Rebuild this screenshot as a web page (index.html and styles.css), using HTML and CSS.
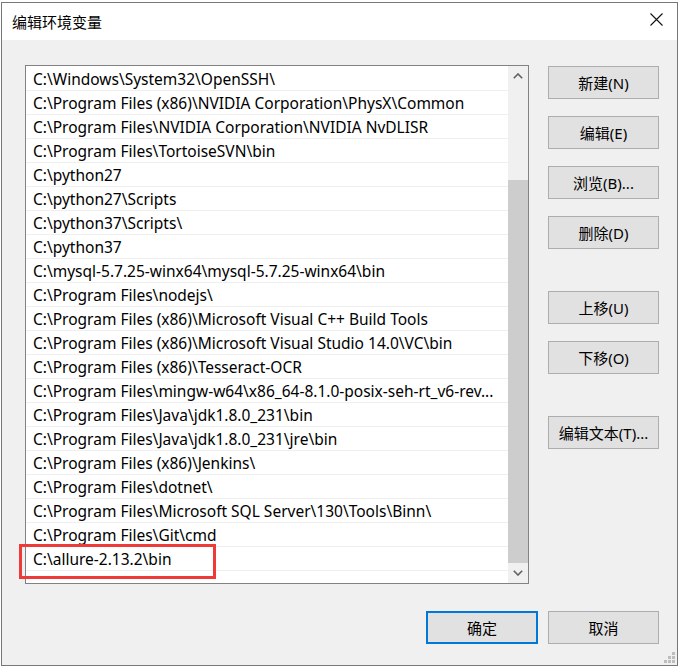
FILE: index.html
```html
<!DOCTYPE html>
<html lang="zh-CN">
<head>
<meta charset="utf-8">
<title>编辑环境变量</title>
<link rel="stylesheet" href="styles.css">
</head>
<body>
<div class="window">
  <div class="titlebar">
    <span class="title">编辑环境变量</span>
    <svg class="close" width="13" height="13" viewBox="0 0 13 13"><path d="M0.5 0.5 L12.5 12.5 M12.5 0.5 L0.5 12.5" stroke="#111" stroke-width="1.1" fill="none"/></svg>
  </div>
  <div class="main">
    <div class="list">
      <div class="rows">
        <div class="row">C:\Windows\System32\OpenSSH\</div>
        <div class="row">C:\Program Files (x86)\NVIDIA Corporation\PhysX\Common</div>
        <div class="row">C:\Program Files\NVIDIA Corporation\NVIDIA NvDLISR</div>
        <div class="row">C:\Program Files\TortoiseSVN\bin</div>
        <div class="row">C:\python27</div>
        <div class="row">C:\python27\Scripts</div>
        <div class="row">C:\python37\Scripts\</div>
        <div class="row">C:\python37</div>
        <div class="row">C:\mysql-5.7.25-winx64\mysql-5.7.25-winx64\bin</div>
        <div class="row">C:\Program Files\nodejs\</div>
        <div class="row">C:\Program Files (x86)\Microsoft Visual C++ Build Tools</div>
        <div class="row">C:\Program Files (x86)\Microsoft Visual Studio 14.0\VC\bin</div>
        <div class="row">C:\Program Files (x86)\Tesseract-OCR</div>
        <div class="row">C:\Program Files\mingw-w64\x86_64-8.1.0-posix-seh-rt_v6-rev...</div>
        <div class="row">C:\Program Files\Java\jdk1.8.0_231\bin</div>
        <div class="row">C:\Program Files\Java\jdk1.8.0_231\jre\bin</div>
        <div class="row">C:\Program Files (x86)\Jenkins\</div>
        <div class="row">C:\Program Files\dotnet\</div>
        <div class="row">C:\Program Files\Microsoft SQL Server\130\Tools\Binn\</div>
        <div class="row">C:\Program Files\Git\cmd</div>
        <div class="row">C:\allure-2.13.2\bin</div>
      </div>
      <div class="scrollbar">
        <div class="sb-btn"><svg width="10" height="6" viewBox="0 0 10 6"><path d="M0.8 5.2 L5 1 L9.2 5.2" stroke="#606060" stroke-width="1.6" fill="none"/></svg></div>
        <div class="track"><div class="thumb"></div></div>
        <div class="sb-btn"><svg width="10" height="6" viewBox="0 0 10 6"><path d="M0.8 0.8 L5 5 L9.2 0.8" stroke="#606060" stroke-width="1.6" fill="none"/></svg></div>
      </div>
    </div>
    <div class="side">
      <div class="btn">新建(N)</div>
      <div class="btn">编辑(E)</div>
      <div class="btn">浏览(B)...</div>
      <div class="btn">删除(D)</div>
      <div class="btn group">上移(U)</div>
      <div class="btn">下移(O)</div>
      <div class="btn group">编辑文本(T)...</div>
    </div>
  </div>
  <div class="footer">
    <div class="btn primary">确定</div>
    <div class="btn">取消</div>
  </div>
  <div class="highlight"></div>
  <svg class="grip" width="12" height="12" viewBox="0 0 12 12">
    <rect x="9" y="0" width="3" height="3" fill="#bdbdbd"/>
    <rect x="5" y="4" width="3" height="3" fill="#bdbdbd"/>
    <rect x="9" y="4" width="3" height="3" fill="#bdbdbd"/>
    <rect x="1" y="8" width="3" height="3" fill="#bdbdbd"/>
    <rect x="5" y="8" width="3" height="3" fill="#bdbdbd"/>
    <rect x="9" y="8" width="3" height="3" fill="#bdbdbd"/>
  </svg>
</div>
</body>
</html>
```

FILE: styles.css
```css
html, body {
  margin: 0;
  padding: 0;
  background: #ffffff;
}

body {
  font-family: "Noto Sans", "Noto Sans CJK SC", sans-serif;
  font-size: 15px;
  color: #000;
}

.window {
  position: relative;
  box-sizing: border-box;
  width: 677px;
  height: 664px;
  margin: 2px 0 0 1px;
  border: 1px solid #777777;
  background: #f0f0f0;
  display: flex;
  flex-direction: column;
}

.titlebar {
  height: 37px;
  flex: none;
  background: #ffffff;
  display: flex;
  align-items: center;
  justify-content: space-between;
  padding: 0 14px 0 10px;
}

.title {
  font-family: "Noto Sans CJK SC", sans-serif;
  font-size: 15px;
  margin-top: -1px;
}

.close {
  display: block;
  margin-top: -4px;
}

.main {
  display: flex;
  padding: 25px 18px 0 23px;
}

.list {
  box-sizing: border-box;
  width: 504px;
  height: 519px;
  border: 1px solid #828282;
  background: #ffffff;
  display: flex;
}

.rows {
  flex: 1;
  min-width: 0;
  padding-top: 1px;
  overflow: hidden;
}

.row {
  box-sizing: border-box;
  height: 24px;
  line-height: 24px;
  padding-left: 7px;
  font-size: 15.5px;
  border-bottom: 1px solid #efefef;
  white-space: nowrap;
  overflow: hidden;
}

.scrollbar {
  width: 20px;
  flex: none;
  background: #f0f0f0;
  display: flex;
  flex-direction: column;
}

.sb-btn {
  height: 20px;
  flex: none;
  display: flex;
  align-items: center;
  justify-content: center;
}

.sb-btn svg {
  display: block;
}

.track {
  flex: 1;
  display: flex;
  flex-direction: column;
  justify-content: flex-end;
}

.thumb {
  height: 383px;
  background: #cdcdcd;
}

.side {
  width: 111px;
  margin-left: 19px;
  padding-top: 1px;
  display: flex;
  flex-direction: column;
  gap: 17px;
}

.btn {
  box-sizing: border-box;
  width: 111px;
  height: 33px;
  border: 1px solid #adadad;
  background: #e1e1e1;
  display: flex;
  align-items: center;
  justify-content: center;
  font-family: "Noto Sans", "Noto Sans CJK SC", sans-serif;
  font-size: 15px;
  white-space: nowrap;
}

.btn.group {
  margin-top: 25px;
}

.footer {
  display: flex;
  justify-content: flex-end;
  gap: 10px;
  padding: 27px 18px 0 0;
}

.btn.primary {
  width: 112px;
  border: 2px solid #0078d7;
}

.highlight {
  position: absolute;
  left: 17px;
  top: 541px;
  width: 197px;
  height: 35px;
  box-sizing: border-box;
  border: 3px solid #ef3a3a;
}

.grip {
  position: absolute;
  right: 2px;
  bottom: 1px;
  display: block;
}
```
